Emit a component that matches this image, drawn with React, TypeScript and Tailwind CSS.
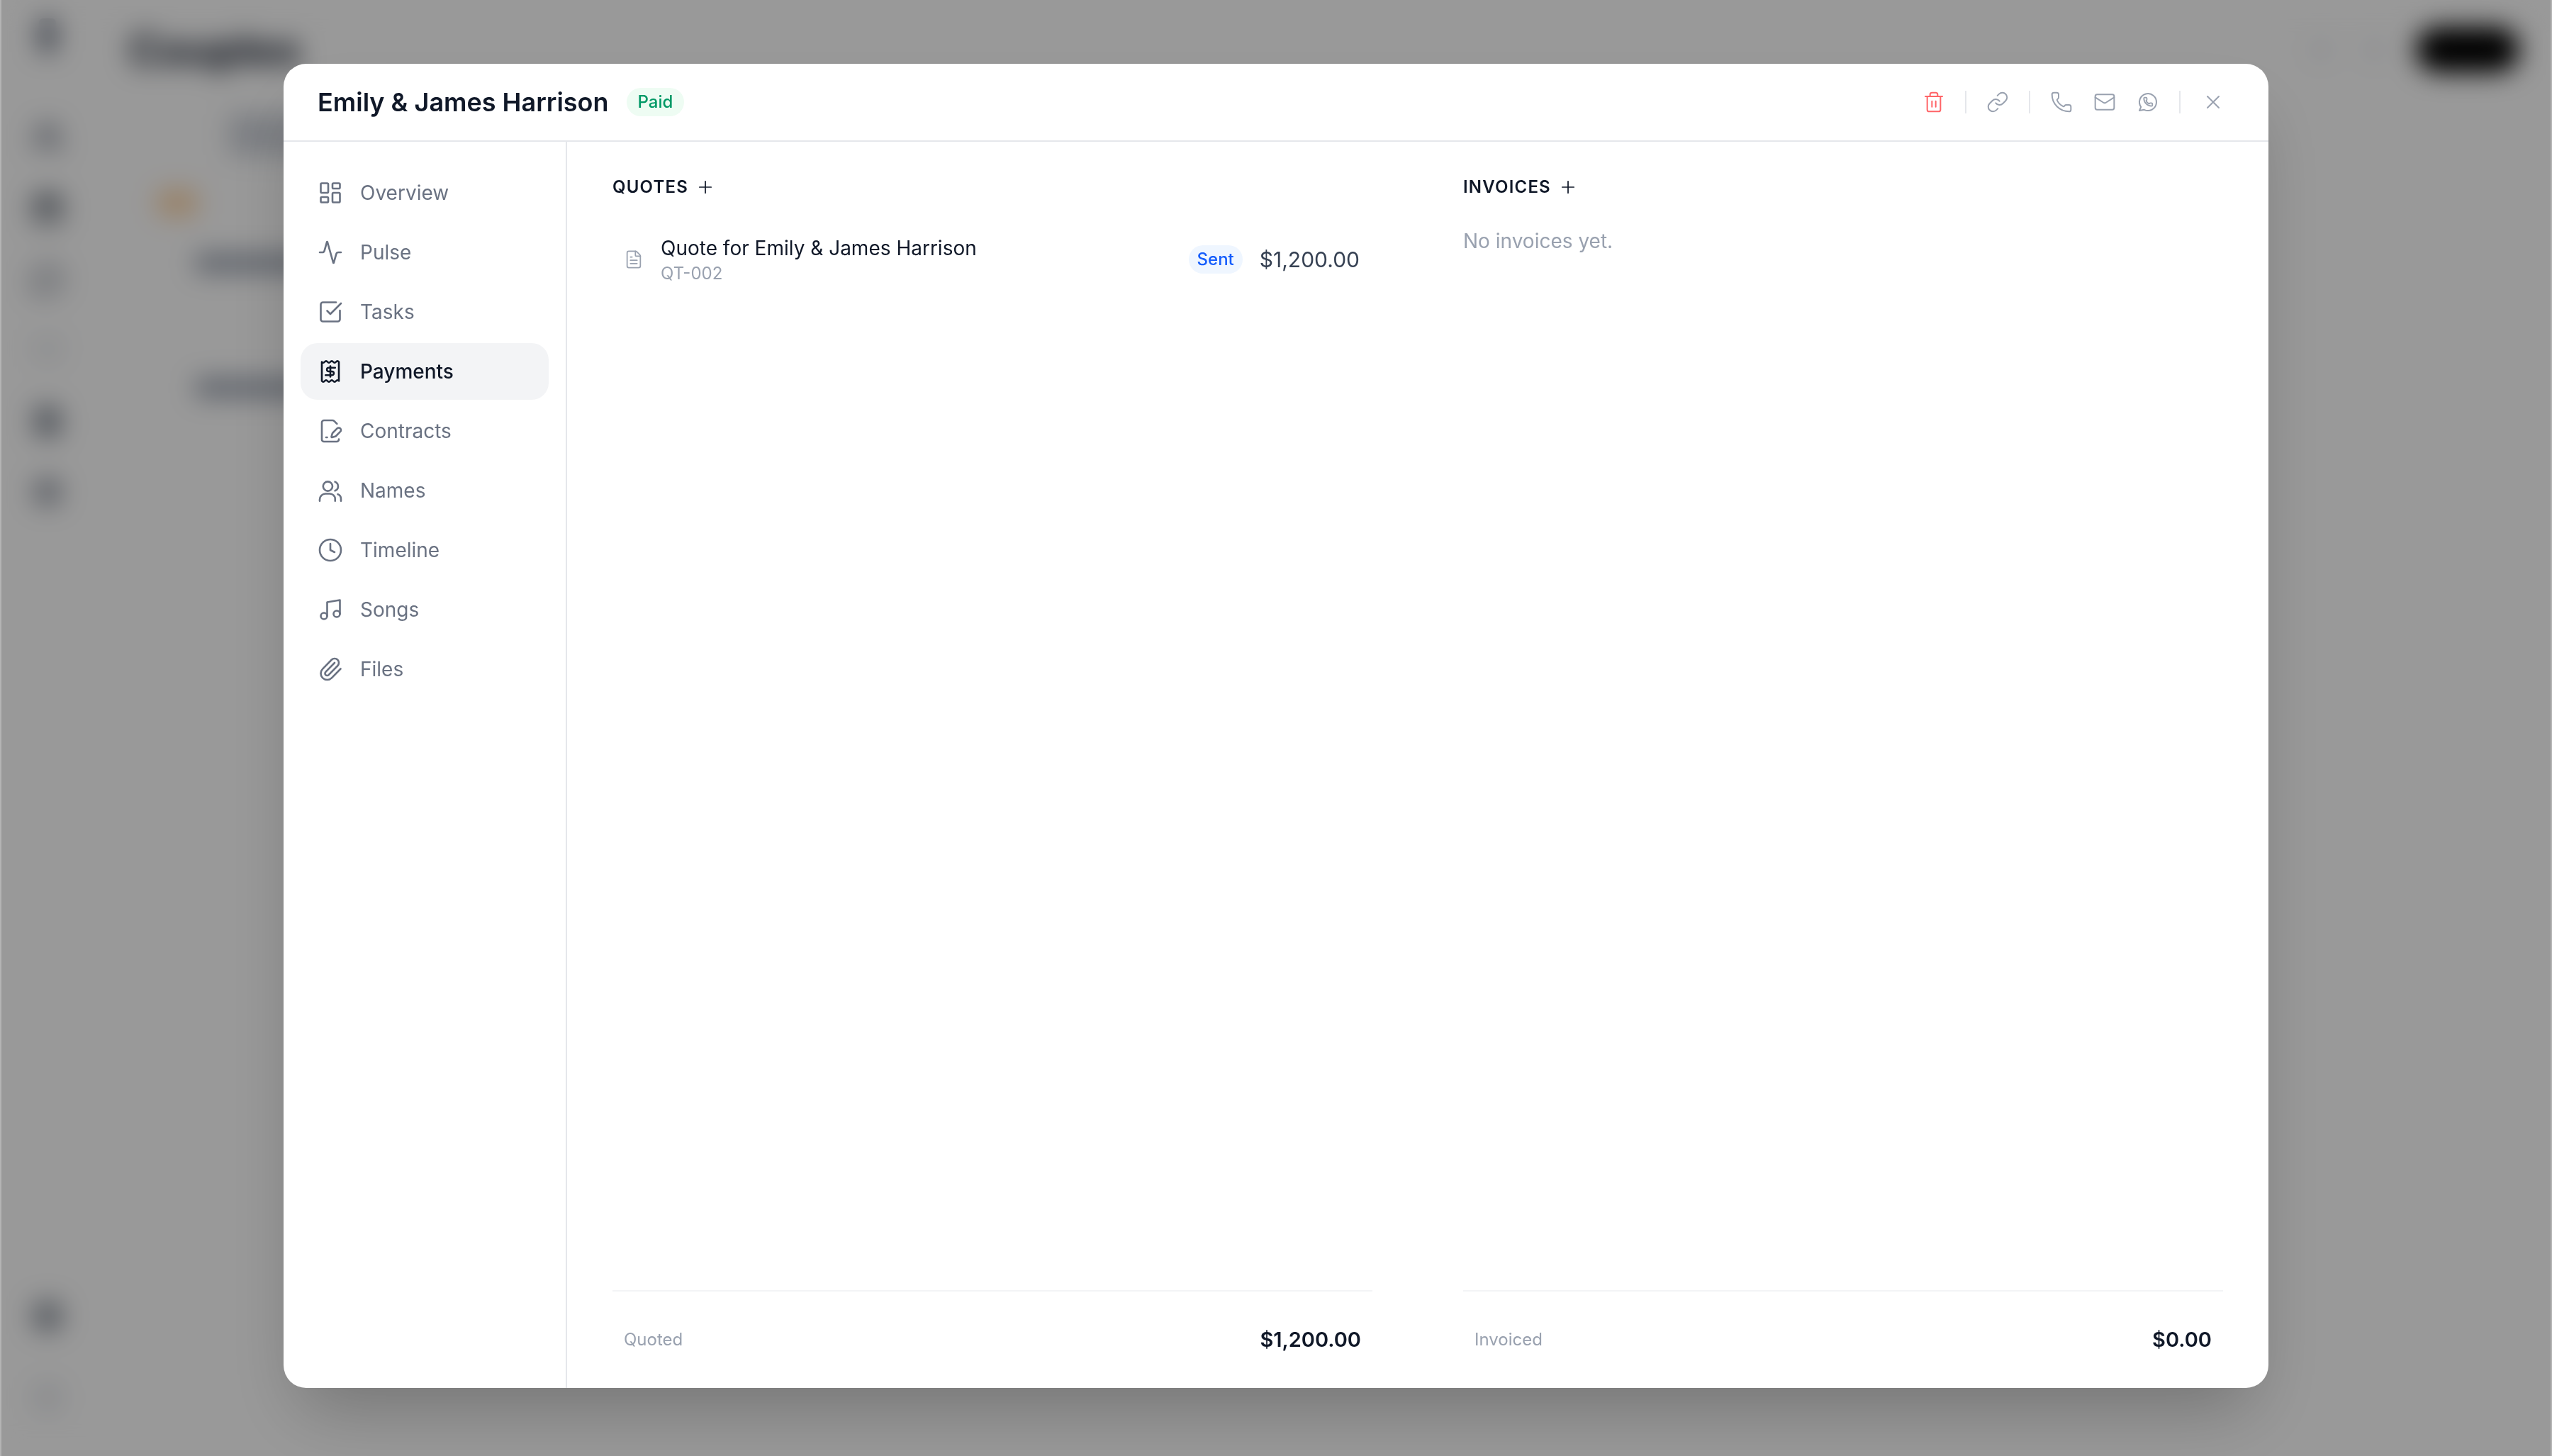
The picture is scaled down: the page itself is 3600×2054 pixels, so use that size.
import {
  Activity,
  Clock,
  FilePenLine,
  FileText,
  LayoutDashboard,
  Link,
  Mail,
  Music,
  Paperclip,
  Phone,
  Plus,
  SquareCheckBig,
  Trash2,
  X,
  Calendar,
  Heart,
  MessageCircle,
  Settings,
  Users,
  CircleHelp,
  CircleUser,
} from "lucide-react";

type IconProps = { className?: string; strokeWidth?: number };

const ReceiptDollar = ({ className, strokeWidth = 1.75 }: IconProps) => (
  <svg
    viewBox="0 0 24 24"
    fill="none"
    stroke="currentColor"
    strokeWidth={strokeWidth}
    strokeLinecap="round"
    strokeLinejoin="round"
    className={className}
  >
    <path d="M4 3q1.33 1.5 2.67 0t2.67 0t2.67 0t2.67 0t2.67 0t2.67 0V21q-1.33 -1.5 -2.67 0t-2.67 0t-2.67 0t-2.67 0t-2.67 0t-2.67 0Z" />
    <path d="M16.5 8.5h-6a1.75 1.75 0 0 0 0 3.5h3a1.75 1.75 0 0 1 0 3.5h-6" />
    <path d="M12 7v10" />
  </svg>
);

const PeopleIcon = ({ className, strokeWidth = 1.75 }: IconProps) => (
  <svg
    viewBox="0 0 24 24"
    fill="none"
    stroke="currentColor"
    strokeWidth={strokeWidth}
    strokeLinecap="round"
    strokeLinejoin="round"
    className={className}
  >
    <circle cx="9.6" cy="8" r="4.4" />
    <path d="M2 21.8v-1.3a5.5 5.5 0 0 1 5.5-5.5h4a5 5 0 0 1 5 5v1.8" />
    <path d="M16.4 3.8a4.5 4.5 0 0 1 0 8.4" />
    <path d="M19 15.5a4.6 4.6 0 0 1 3 4.4v1.9" />
  </svg>
);

const WhatsappIcon = ({ className, strokeWidth = 1.5 }: IconProps) => (
  <svg
    viewBox="0 0 24 24"
    fill="none"
    stroke="currentColor"
    strokeWidth={strokeWidth}
    strokeLinecap="round"
    strokeLinejoin="round"
    className={className}
  >
    <path d="M3 21l1.65-3.8a9 9 0 1 1 3.4 2.9L3 21Z" />
    <path
      transform="translate(6.8 6.3) scale(.45)"
      strokeWidth={3}
      d="M13.832 16.568a1 1 0 0 0 1.213-.303l.355-.465A2 2 0 0 1 17 15h3a2 2 0 0 1 2 2v3a2 2 0 0 1-2 2A18 18 0 0 1 2 4a2 2 0 0 1 2-2h3a2 2 0 0 1 2 2v3a2 2 0 0 1-.8 1.6l-.468.351a1 1 0 0 0-.292 1.233 14 14 0 0 0 6.392 6.384"
    />
  </svg>
);

const navItems = [
  { label: "Overview", icon: LayoutDashboard },
  { label: "Pulse", icon: Activity },
  { label: "Tasks", icon: SquareCheckBig },
  { label: "Payments", icon: ReceiptDollar, active: true },
  { label: "Contracts", icon: FilePenLine },
  { label: "Names", icon: PeopleIcon },
  { label: "Timeline", icon: Clock },
  { label: "Songs", icon: Music },
  { label: "Files", icon: Paperclip },
];

const backgroundIcons = [
  { icon: Users, className: "size-[44px] text-gray-500" },
  { icon: Calendar, className: "size-[44px] text-gray-800" },
  { icon: MessageCircle, className: "size-[44px] text-gray-500" },
  { icon: Heart, className: "size-[44px] text-gray-300" },
  { icon: FileText, className: "size-[44px] text-gray-600" },
  { icon: Settings, className: "size-[44px] text-gray-500" },
];

// the page that sits behind the dialog, only ever seen blurred
const BackgroundPage = () => (
  <div className="flex h-full w-full bg-white">
    <aside className="flex w-[134px] flex-col items-center pt-[26px] pb-[60px]">
      <div className="h-[48px] w-[24px] rounded-md bg-gray-500" />
      <div className="mt-[98px] flex flex-col gap-[56px]">
        {backgroundIcons.map(({ icon: Icon, className }, i) => (
          <Icon key={i} className={className} strokeWidth={3} />
        ))}
      </div>
      <div className="mt-auto flex flex-col gap-[72px]">
        <CircleUser className="size-[44px] text-gray-600" strokeWidth={3} />
        <CircleHelp className="size-[44px] text-gray-300" strokeWidth={3} />
      </div>
    </aside>
    <main className="flex flex-1 flex-col">
      <header className="flex items-center justify-between pt-[30px] pr-[46px] pl-[48px]">
        <h1 className="text-[60px] leading-[80px] font-bold text-gray-900">Couples</h1>
        <div className="flex items-center gap-[40px]">
          <div className="size-[36px] rounded-full bg-gray-100" />
          <div className="size-[36px] rounded-full bg-gray-100" />
          <div className="h-[64px] w-[146px] rounded-full bg-black" />
        </div>
      </header>
      <div className="mt-[50px] pl-[188px]">
        <div className="h-[60px] w-[200px] rounded-lg bg-gray-300" />
      </div>
      <div className="mt-[48px] ml-[88px] h-[36px] w-[56px] rounded-md bg-orange-200" />
      <div className="mt-[54px] ml-[142px] flex flex-col gap-[150px]">
        <div className="h-[26px] w-[200px] rounded bg-gray-400" />
        <div className="h-[26px] w-[200px] rounded bg-gray-400" />
      </div>
    </main>
  </div>
);

const Divider = () => <div className="h-[32px] w-[2px] bg-gray-200" />;

const SectionHeading = ({ title }: { title: string }) => (
  <div className="flex h-[32px] items-center gap-[10px]">
    <h3 className="text-[24px] font-semibold tracking-[0.05em] text-gray-900 uppercase">{title}</h3>
    <Plus className="size-[28px] text-gray-900" strokeWidth={1.5} />
  </div>
);

const FooterTotal = ({ label, value }: { label: string; value: string }) => (
  <div className="mt-auto flex h-[138px] items-center justify-between border-t-2 border-gray-100 px-[16px]">
    <span className="text-[24px] text-gray-400">{label}</span>
    <span className="text-[29px] font-semibold text-gray-900">{value}</span>
  </div>
);

const App = () => (
  <div className="relative h-[2054px] w-[3600px] overflow-hidden font-['Inter',sans-serif]">
    <BackgroundPage />
    <div className="absolute inset-0 flex items-start justify-center border-x-2 border-[#b4b4b4] bg-black/40 pt-[90px] backdrop-blur-[18px]">
      <section className="flex h-[1868px] w-[2800px] flex-col overflow-hidden rounded-[32px] bg-white shadow-[0_50px_100px_-24px_rgba(0,0,0,0.25)]">
        <header className="flex h-[110px] shrink-0 items-center justify-between border-b-2 border-gray-200 pr-[50px] pl-[48px]">
          <div className="flex items-center gap-[25px]">
            <h2 className="text-[36px] font-semibold text-gray-900">Emily &amp; James Harrison</h2>
            <span className="flex h-[40px] items-center rounded-full bg-[#eefcf3] px-[16px] text-[24px] font-medium text-emerald-600">
              Paid
            </span>
          </div>
          <div className="flex items-center gap-[16px]">
            <button className="p-[12px] text-red-400">
              <Trash2 className="size-[32px]" strokeWidth={1.5} />
            </button>
            <Divider />
            <button className="p-[12px] text-gray-400">
              <Link className="size-[32px]" strokeWidth={1.5} />
            </button>
            <Divider />
            <div className="flex items-center gap-[5px] text-gray-400">
              <button className="p-[12px]">
                <Phone className="size-[32px]" strokeWidth={1.5} />
              </button>
              <button className="p-[12px]">
                <Mail className="size-[32px]" strokeWidth={1.5} />
              </button>
              <button className="p-[12px]">
                <WhatsappIcon className="size-[32px]" />
              </button>
            </div>
            <Divider />
            <button className="ml-[2px] p-[12px] text-gray-400">
              <X className="size-[32px]" strokeWidth={1.5} />
            </button>
          </div>
        </header>
        <div className="flex min-h-0 flex-1">
          <nav className="flex w-[400px] shrink-0 flex-col gap-[4px] border-r-2 border-gray-200 px-[24px] pt-[32px]">
            {navItems.map(({ label, icon: Icon, active }) => (
              <a
                key={label}
                className={
                  active
                    ? "flex h-[80px] items-center gap-[24px] rounded-[24px] bg-gray-100 px-[24px] text-[28px] font-medium text-gray-900"
                    : "flex h-[80px] items-center gap-[24px] rounded-[24px] px-[24px] text-[28px] font-normal text-gray-500"
                }
              >
                <Icon className="size-[36px]" strokeWidth={1.75} />
                {label}
              </a>
            ))}
          </nav>
          <div className="grid flex-1 grid-cols-2 gap-[128px] px-[64px] pt-[48px]">
            <div className="flex flex-col">
              <SectionHeading title="Quotes" />
              <div className="mt-[36px] flex items-center justify-between pr-[18px] pl-[16px] py-[14px]">
                <div className="flex items-center gap-[24px]">
                  <FileText className="size-[28px] text-gray-400" strokeWidth={1.5} />
                  <div>
                    <p className="text-[28px] leading-[40px] text-gray-900">Quote for Emily &amp; James Harrison</p>
                    <p className="text-[24px] leading-[32px] text-gray-400">QT-002</p>
                  </div>
                </div>
                <div className="flex items-center gap-[24px]">
                  <span className="flex h-[40px] items-center rounded-full bg-blue-50 px-[12px] text-[24px] font-medium text-blue-600">
                    Sent
                  </span>
                  <span className="text-[30px] text-gray-700">$1,200.00</span>
                </div>
              </div>
              <FooterTotal label="Quoted" value="$1,200.00" />
            </div>
            <div className="flex flex-col">
              <SectionHeading title="Invoices" />
              <p className="mt-[40px] text-[28px] leading-[40px] text-gray-400">No invoices yet.</p>
              <FooterTotal label="Invoiced" value="$0.00" />
            </div>
          </div>
        </div>
      </section>
    </div>
  </div>
);

export default App;
